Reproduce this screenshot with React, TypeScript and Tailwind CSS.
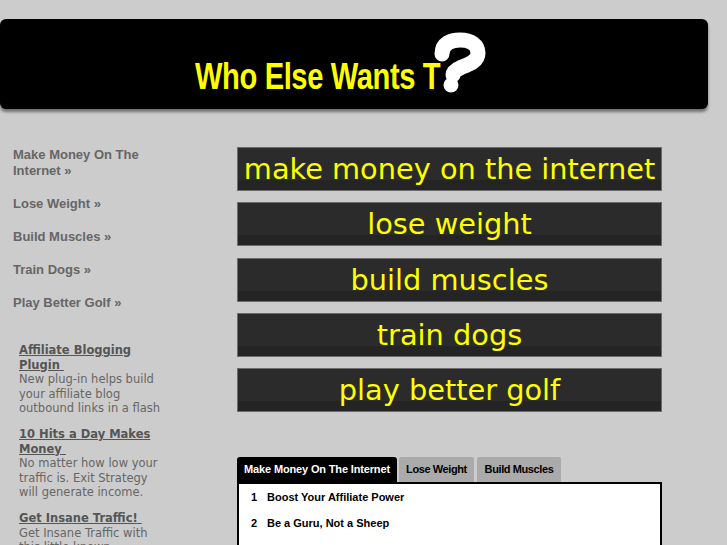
import React from "react";

const links = [
  "Make Money On The Internet »",
  "Lose Weight »",
  "Build Muscles »",
  "Train Dogs »",
  "Play Better Golf »",
];

const ads = [
  {
    title: "Affiliate Blogging Plugin",
    desc: "New plug-in helps build your affiliate blog outbound links in a flash",
  },
  {
    title: "10 Hits a Day Makes Money",
    desc: "No matter how low your traffic is. Exit Strategy will generate income.",
  },
  {
    title: "Get Insane Traffic!",
    desc: "Get Insane Traffic with this little known technique",
  },
];

const buttons = [
  "make money on the internet",
  "lose weight",
  "build muscles",
  "train dogs",
  "play better golf",
];

const items = [
  "Boost Your Affiliate Power",
  "Be a Guru, Not a Sheep",
  "Secret Affiliate Commissions",
];

export default function App() {
  return (
    <div className="min-h-screen w-full overflow-hidden bg-[#cccccc] pt-[19px]">
      {/* Header */}
      <div className="flex h-[90px] w-[708px] items-start rounded-[6px] bg-black pl-[195px] shadow-[0_3px_3px_rgba(0,0,0,0.45)]">
        <div className="mt-[40px] w-[253px] shrink-0">
          <span className="inline-block origin-left scale-x-[0.81] whitespace-nowrap font-['Liberation_Sans',Arial,sans-serif] text-[36px] font-bold leading-none tracking-[-0.5px] text-[#ffff00]">
            Who Else Wants T
          </span>
        </div>
        <svg
          className="-ml-[17px] mt-[13px] shrink-0"
          width="56"
          height="62"
          viewBox="0 0 56 62"
        >
          <path
            d="M11 22 C11 11 20 8 29 8 C40 8 47 13 47 21 C47 29 39 32 31 35 C24 38 22 41 22 43"
            fill="none"
            stroke="#ffffff"
            strokeWidth="15"
            strokeLinecap="round"
          />
          <circle cx="20" cy="53" r="7.5" fill="#ffffff" />
        </svg>
      </div>

      <div className="mt-[38px] flex">
        {/* Sidebar */}
        <div className="w-[237px] shrink-0">
          <ul className="w-[170px] pl-[13px]">
            {links.map((l) => (
              <li
                key={l}
                className="mb-[17px] w-[150px] font-['Liberation_Sans',Arial,sans-serif] text-[13px] font-bold leading-[16px] text-[#666666]"
              >
                {l}
              </li>
            ))}
          </ul>
          <div className="mt-[32px] w-[167px] pl-[19px] font-['DejaVu_Sans',Verdana,sans-serif] text-[11.5px] leading-[14.5px]">
            {ads.map((a) => (
              <div key={a.title} className="mb-[11.5px]">
                <div className="font-bold text-[#555555] underline">
                  {a.title}&nbsp;
                </div>
                <div className="text-[#666666]">{a.desc}</div>
              </div>
            ))}
          </div>
        </div>

        {/* Main */}
        <div className="w-[425px] shrink-0">
          {buttons.map((b) => (
            <div
              key={b}
              className="mb-[11.25px] h-[44px] border border-[#6b6b6b] bg-[linear-gradient(#2b2b2b_0%,#2b2b2b_76%,#242424_76%,#242424_100%)] text-center font-['DejaVu_Sans',Verdana,sans-serif] text-[28.8px] leading-[42px] text-[#ffff00]"
            >
              {b}
            </div>
          ))}

          <div className="mt-[45px]">
            <div className="flex items-end font-['Liberation_Sans',Arial,sans-serif] text-[11px] font-bold">
              <div className="h-[25px] w-[160px] rounded-t-[3px] bg-black text-center leading-[25px] tracking-[-0.15px] text-white">
                Make Money On The Internet
              </div>
              <div className="ml-[2px] h-[25px] w-[75px] rounded-t-[2px] bg-[#aaaaaa] text-center leading-[25px] tracking-[-0.4px] text-black">
                Lose Weight
              </div>
              <div className="ml-[3px] h-[25px] w-[84px] rounded-t-[2px] bg-[#aaaaaa] text-center leading-[25px] tracking-[-0.4px] text-black">
                Build Muscles
              </div>
            </div>
            <div className="border-2 border-black bg-white pb-[10px]">
              {items.map((it, i) => (
                <div
                  key={it}
                  className="flex h-[26px] items-center pl-[12px] font-['Liberation_Sans',Arial,sans-serif] text-[11px] font-bold text-black"
                >
                  <span className="w-[16px]">{i + 1}</span>
                  <span>{it}</span>
                </div>
              ))}
            </div>
          </div>
        </div>
      </div>
    </div>
  );
}
